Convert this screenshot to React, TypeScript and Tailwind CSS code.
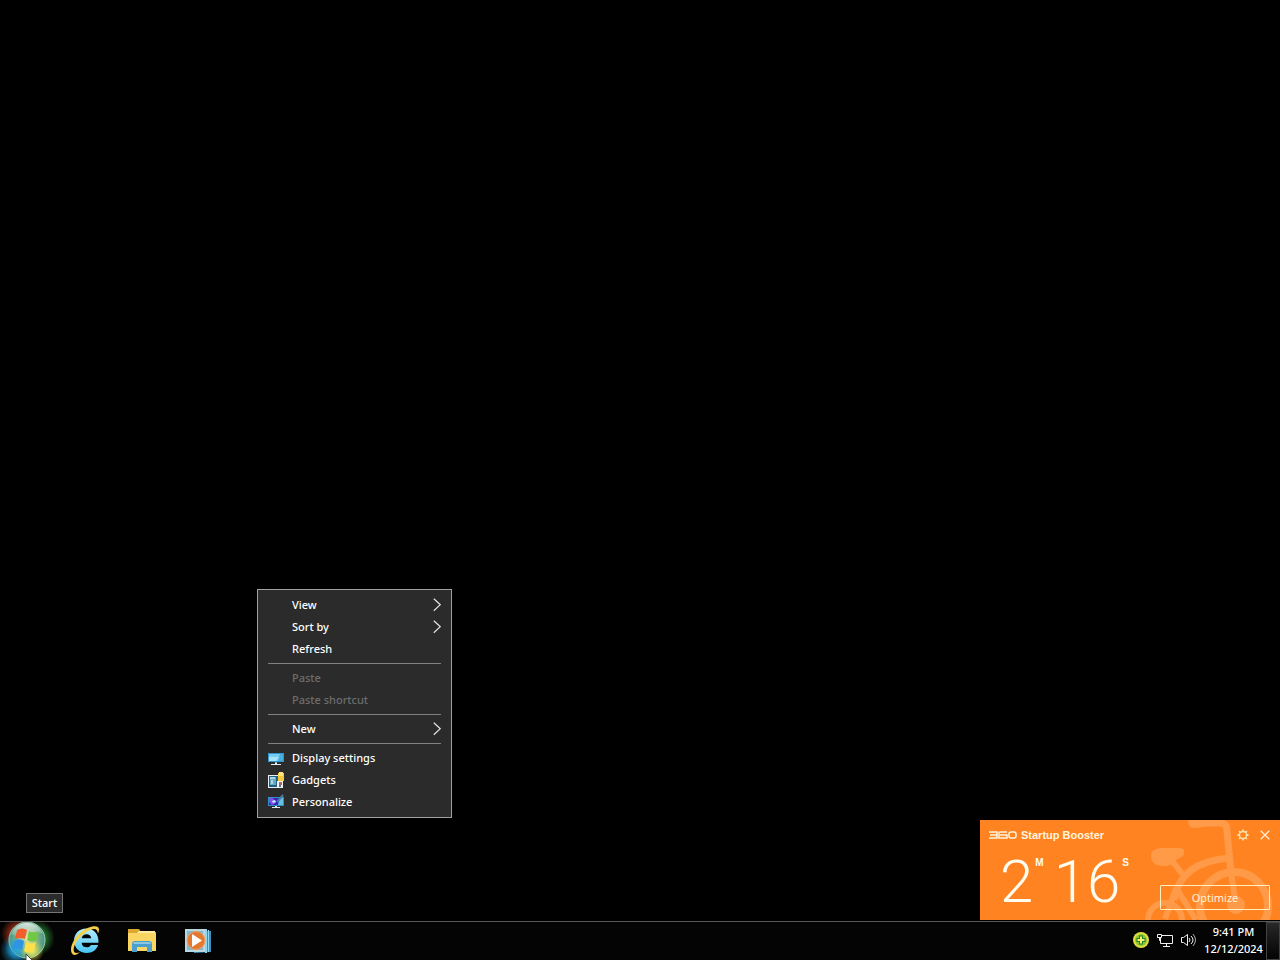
import type { ReactNode } from "react";

function Chevron() {
  return (
    <svg className="h-4 w-2" viewBox="0 0 8 16" fill="none" stroke="#e4e4e4" strokeWidth="1.2" aria-hidden="true">
      <path d="M.8 1.700 7.300 7.700 .8 13.700" />
    </svg>
  );
}

function DisplayIcon() {
  return (
    <svg className="size-4" viewBox="0 0 16 16" aria-hidden="true">
      <path fill="#3193cf" d="M0 3h16v9H0z" />
      <path fill="#75cdf0" d="M1 4h14v7H1z" />
      <path fill="#a7e4f8" d="M1 7h10L8 11H1z" />
      <path fill="#48aee0" d="M12 4h3v7h-5z" />
      <path fill="#8ab5cc" d="M7 12h2v2H7z" />
      <path fill="#dcecf3" d="M3 14h10v1H3zM7 13h2v1H7z" />
    </svg>
  );
}

function GadgetsIcon() {
  return (
    <svg className="size-4" viewBox="0 0 16 16" aria-hidden="true">
      <path fill="#e6eef2" d="M0 3h12v13H0z" />
      <path fill="#205f83" d="M1 4h9v11H1z" />
      <path fill="#65a9c7" d="M2 5h6v8H2z" />
      <path fill="#aed5e3" d="M2 5h5v2H2zM3 8h2v4H3z" />
      <path fill="#f6c93d" d="M10 1h6v8h-6z" />
      <path fill="#ffe77b" d="M11 0h4v4h-4z" />
      <path fill="#edf3f5" d="M9 9h6v7H9z" />
      <path fill="#b6655d" d="M11 10h3v3h-3z" />
      <path fill="#5b7485" d="M11 13h2v2h-2z" />
    </svg>
  );
}

function PersonalizeIcon() {
  return (
    <svg className="size-4" viewBox="0 0 16 16" aria-hidden="true">
      <path fill="#318fc7" d="M0 3h16v9H0z" />
      <path fill="#3326b7" d="M1 4h11l-2 7H1z" />
      <path fill="#8250e6" d="M1 4h4l3 5-4 2-3-3z" />
      <path fill="#c6edff" d="m4 7 3-1 1 2-3 1z" />
      <path fill="#68bee4" d="M12 4h3v7h-5z" />
      <path stroke="#477fa0" strokeWidth="2" d="m9 8 6-7" />
      <path fill="#dcecf3" d="M7 12h2v1h3v1H4v-1h3z" />
    </svg>
  );
}

type ItemProps = { label: string; icon?: ReactNode; submenu?: boolean; disabled?: boolean };

function MenuItem({ label, icon, submenu, disabled }: ItemProps) {
  return (
    <button
      type="button"
      role="menuitem"
      disabled={disabled}
      aria-haspopup={submenu ? "menu" : undefined}
      className="flex h-[22px] w-full items-center gap-2 px-2.5 text-left text-white hover:bg-[#414141] disabled:text-[#6d6d6d] disabled:hover:bg-transparent"
    >
      <span className="flex size-4 items-center">{icon}</span>
      <span className="flex-1">{label}</span>
      {submenu && <Chevron />}
    </button>
  );
}

function Separator() {
  return <hr className="mx-2.5 my-[3px] border-t border-[#808080]" />;
}

function DesktopMenu() {
  return (
    <div role="menu" aria-label="Desktop" className="absolute left-[257px] top-[589px] w-[195px] border border-[#a0a0a0] bg-[#2b2b2b] py-1 text-[11px] font-medium leading-4">
      <MenuItem label="View" submenu />
      <MenuItem label="Sort by" submenu />
      <MenuItem label="Refresh" />
      <Separator />
      <MenuItem label="Paste" disabled />
      <MenuItem label="Paste shortcut" disabled />
      <Separator />
      <MenuItem label="New" submenu />
      <Separator />
      <MenuItem label="Display settings" icon={<DisplayIcon />} />
      <MenuItem label="Gadgets" icon={<GadgetsIcon />} />
      <MenuItem label="Personalize" icon={<PersonalizeIcon />} />
    </div>
  );
}

function Bicycle() {
  return (
    <svg className="absolute bottom-0 right-0 h-[100px] w-[150px]" viewBox="0 0 150 100" fill="none" stroke="#ff9a48" aria-hidden="true">
      <path fill="#ff9a48" stroke="none" d="M21 35q0-6 10-7h18q8 0 4 8l-7 4q-4 6-13 6-12 0-12-11z" />
      <path strokeWidth="6" d="m42 41 12 15" />
      <path strokeWidth="7" d="M44 80Q50 42 99 38" />
      <path fill="#ff9a48" stroke="none" d="M58 0h21v5q-5 3-16 3-5-1-5-8z" />
      <path strokeWidth="7" d="M72 3h18q7 0 7 8l4 42" />
      <circle cx="104" cy="86" r="34" strokeWidth="8" />
      <path strokeWidth="6" d="m101 52 5 34" />
      <circle cx="106" cy="85" r="9" fill="#ff9a48" stroke="none" />
      <circle cx="35" cy="100" r="17" strokeWidth="6" />
      <path strokeWidth="6" d="m46 68-11 31M47 69l19 31" />
    </svg>
  );
}

function StartupBooster() {
  return (
    <section aria-label="360 Startup Booster" className="absolute bottom-px right-0 flex h-[100px] w-[300px] flex-col overflow-hidden bg-[#ff8421] text-[#fff5dc]">
      <Bicycle />
      <header className="relative flex h-[30px] items-center gap-2 pl-[9px] pr-2">
        <h2 className="flex flex-1 items-center gap-1 text-[11px] font-bold leading-3">
          <svg className="h-2 w-7" viewBox="0 0 28 8" fill="none" stroke="currentColor" strokeWidth="1.5" role="img" aria-label="360">
            <path d="M0 1h8v6H0M1 4h7M18 1h-7q-1 0-1 1v5h8V4h-7" />
            <rect x="20" y="1" width="7" height="6" rx="2" />
          </svg>
          <span className="font-['Liberation_Sans']">Startup Booster</span>
        </h2>
        <button type="button" aria-label="Settings" className="flex size-3.5 items-center justify-center">
          <svg className="size-3" viewBox="0 0 12 12" fill="none" stroke="#ffe1a8" aria-hidden="true">
            <circle cx="6" cy="6" r="3.5" strokeWidth="1.3" />
            <path strokeWidth="1.8" d="M6 .5v1.6M6 9.900v1.600M.5 6h1.600M9.900 6h1.600M2.100 2.100l1.200 1.200M8.700 8.700l1.200 1.200M9.900 2.100 8.700 3.300M3.300 8.700 2.100 9.900" />
          </svg>
        </button>
        <button type="button" aria-label="Close" className="flex size-3.5 items-center justify-center">
          <svg className="size-2.5" viewBox="0 0 10 10" stroke="#ffefd0" strokeWidth="1.3" aria-hidden="true">
            <path d="m.7.7 8.600 8.600M9.300.7.7 9.300" />
          </svg>
        </button>
      </header>
      <div className="relative flex flex-1 items-start justify-between pl-5 pr-2.5">
        <p className="flex items-start gap-0.5 font-['Roboto'] font-light text-[#fffcf0]">
          <span className="text-[60px] leading-[64px]">2</span>
          <span className="mr-2 pt-[7px] font-['Liberation_Sans'] text-[10px] font-bold leading-3">M</span>
          <span className="text-[60px] leading-[64px]">16</span>
          <span className="pt-[7px] font-['Liberation_Sans'] text-[10px] font-bold leading-3">S</span>
        </p>
        <button type="button" className="mb-2.5 h-[25px] w-[110px] self-end rounded-[1px] border border-[#fff0c0] text-[11px] leading-4">
          Optimize
        </button>
      </div>
    </section>
  );
}

function StartOrb() {
  return (
    <svg className="h-[38px] w-[54px]" viewBox="0 0 54 38" aria-hidden="true">
      <defs>
        <radialGradient id="orb" cx="50%" cy="45%" r="58%">
          <stop offset="0" stopColor="#f3eda0" />
          <stop offset=".5" stopColor="#7fb08a" />
          <stop offset="1" stopColor="#2f8a84" />
        </radialGradient>
        <linearGradient id="shine" x2="0" y2="1">
          <stop stopColor="#fff" stopOpacity=".75" />
          <stop offset="1" stopColor="#fff" stopOpacity=".1" />
        </linearGradient>
        <radialGradient id="glow-red"><stop stopColor="#f04727" /><stop offset="1" stopColor="#f04727" stopOpacity="0" /></radialGradient>
        <radialGradient id="glow-green"><stop stopColor="#38c749" /><stop offset="1" stopColor="#38c749" stopOpacity="0" /></radialGradient>
        <radialGradient id="glow-blue"><stop stopColor="#22a7e6" /><stop offset="1" stopColor="#22a7e6" stopOpacity="0" /></radialGradient>
        <radialGradient id="glow-yellow"><stop stopColor="#f3ee58" /><stop offset="1" stopColor="#f3ee58" stopOpacity="0" /></radialGradient>
      </defs>
      <circle cx="18" cy="12" r="17" fill="url(#glow-red)" />
      <circle cx="37" cy="16" r="18" fill="url(#glow-green)" />
      <circle cx="17" cy="28" r="17" fill="url(#glow-blue)" />
      <circle cx="27" cy="18" r="18" fill="url(#orb)" stroke="#9fc9ad" />
      <circle cx="17" cy="26" r="12" fill="url(#glow-blue)" />
      <circle cx="32" cy="29" r="12" fill="url(#glow-yellow)" />
      <path fill="url(#shine)" d="M11 12a17 17 0 0 1 32 0q-7-4-17 0-9 4-15 0z" />
      <path fill="#f45d2c" d="M17 8q5-3 10 0l-2 9q-5-2-10 0z" />
      <path fill="#70c944" d="M29 9q5 3 10 0l-2 9q-5 3-10 0z" />
      <path fill="#2f94e2" d="M14 19q5-3 10 0l-2 9q-5-3-10 0z" />
      <path fill="#ffe04a" d="M26 20q5 3 10 0l-2 9q-5 3-10 0z" />
      <path fill="#fff" stroke="#222" strokeWidth=".8" d="m26 32 7 7h-7z" />
    </svg>
  );
}

function ExplorerEIcon() {
  return (
    <svg className="size-8" viewBox="0 0 32 32" fill="none" aria-hidden="true">
      <defs><linearGradient id="ie" x2="0" y2="1"><stop stopColor="#b4effd" /><stop offset="1" stopColor="#48c4f3" /></linearGradient></defs>
      <path fill="url(#ie)" fillRule="evenodd" d="M16.500 3.500C9 3.500 4 9 4 15.800 4 23 9.500 28 16.700 28c5.600 0 9.900-3 11.400-8h-7.200c-.8 1.500-2.200 2.300-4.100 2.300-3 0-5-1.700-5.100-4.600h16.800C29 9.500 24 3.500 16.500 3.500zM11.800 13.200c.4-2.600 2.100-4 4.700-4s4.400 1.400 4.700 4z" />
      <path fill="#f6cf48" d="M4.500 30C-2 28.500 1 16 10 8 18 1 29-1 29 4.500c0 1.500-.5 3-1.200 4.300C28 4 25 2.500 19 5.500 9 10.500 2 21.500 4 26.500c.8 2 3.200 1.700 6 .5-2 2-4 3-5.500 3z" />
    </svg>
  );
}

function FolderIcon() {
  return (
    <svg className="size-8" viewBox="0 0 32 32" aria-hidden="true">
      <path fill="#dca82f" d="M2 4h11l2 3h15v19H2z" />
      <path fill="#f9d663" d="M2 8h28v18H2z" />
      <path fill="#ffeaa2" d="M13 6h16v2H11z" />
      <path fill="#4b9fce" d="M6 27v-8q0-3 3-3h14q3 0 3 3v8h-5v-5H11v5z" />
      <path fill="#8ac7e1" d="M8 17h16l1 2H7z" />
    </svg>
  );
}

function PlayerIcon() {
  return (
    <svg className="size-8" viewBox="0 0 32 32" aria-hidden="true">
      <path fill="#388fc2" d="m12 4 17 2v21l-17 1z" />
      <path fill="#91d6ef" d="M23 4h2v24h-2zM26 5h1v22h-1z" />
      <path fill="#b9d7df" d="M3 4h20v23H3z" />
      <path fill="#82b7d0" d="M5 6h16v19H5z" />
      <circle cx="14" cy="15.500" r="9" fill="#e4782e" stroke="#f1a060" />
      <path fill="#fff" d="m10 9 10 6.500-10 6.500z" />
    </svg>
  );
}

function Taskbar() {
  return (
    <footer className="flex h-[39px] shrink-0 items-stretch border-t border-[#575757] bg-[#040404]">
      <button type="button" aria-label="Start" className="w-[54px]"><StartOrb /></button>
      <nav aria-label="Pinned programs" className="ml-4 flex items-center gap-6">
        <button type="button" aria-label="Internet Explorer"><ExplorerEIcon /></button>
        <button type="button" aria-label="File Explorer"><FolderIcon /></button>
        <button type="button" aria-label="Media Player"><PlayerIcon /></button>
      </nav>
      <div className="ml-auto flex items-center gap-2">
        <div className="flex items-center gap-2 pb-0.5">
          <button type="button" aria-label="Security">
            <svg className="size-4" viewBox="0 0 16 16" aria-hidden="true">
              <circle cx="8" cy="8" r="8" fill="#dde03c" />
              <circle cx="8" cy="8" r="6" fill="#8fc437" />
              <path stroke="#237f2b" strokeWidth="4" d="M8 3.500v9M3.500 8h9" />
              <path stroke="#f6f06b" strokeWidth="2" d="M8 4.500v7M4.500 8h7" />
            </svg>
          </button>
          <button type="button" aria-label="Network">
            <svg className="size-4" viewBox="0 0 16 16" fill="none" stroke="#f1f1f1" aria-hidden="true">
              <path d="M5 3.500h10.500v8h-12V6M9.500 11.500v3M6 14.500h7M.500 2.500h4v3h-4zM2.500 5.500v3h1" />
            </svg>
          </button>
          <button type="button" aria-label="Volume">
            <svg className="size-4" viewBox="0 0 16 16" fill="none" stroke="#f1f1f1" aria-hidden="true">
              <path d="M.500 5.500h2l4-3v11l-4-3h-2zM8 6q2 2 0 4M10 4q4 4 0 8" />
              <path stroke="#aaa" d="M12 2q5 6 0 12" />
            </svg>
          </button>
        </div>
        <button type="button" className="flex w-[57px] flex-col items-center whitespace-nowrap pb-0.5 text-[11px] font-medium leading-[17px] text-white">
          <time>9:41 PM</time>
          <time>12/12/2024</time>
        </button>
      </div>
      <button type="button" aria-label="Show desktop" className="ml-1 w-3.5 border border-[#424242] bg-linear-to-b from-[#282828] to-[#050505]" />
    </footer>
  );
}

export default function App() {
  return (
    <div className="flex h-screen flex-col overflow-hidden bg-black font-['Noto_Sans','Open_Sans',sans-serif]">
      <main className="relative flex-1">
        <DesktopMenu />
        <div role="tooltip" className="absolute bottom-2 left-[26px] flex h-5 w-[37px] items-center justify-center border border-[#767676] bg-[#2b2b2b] text-[11px] font-medium leading-4 text-white">Start</div>
        <StartupBooster />
      </main>
      <Taskbar />
    </div>
  );
}
